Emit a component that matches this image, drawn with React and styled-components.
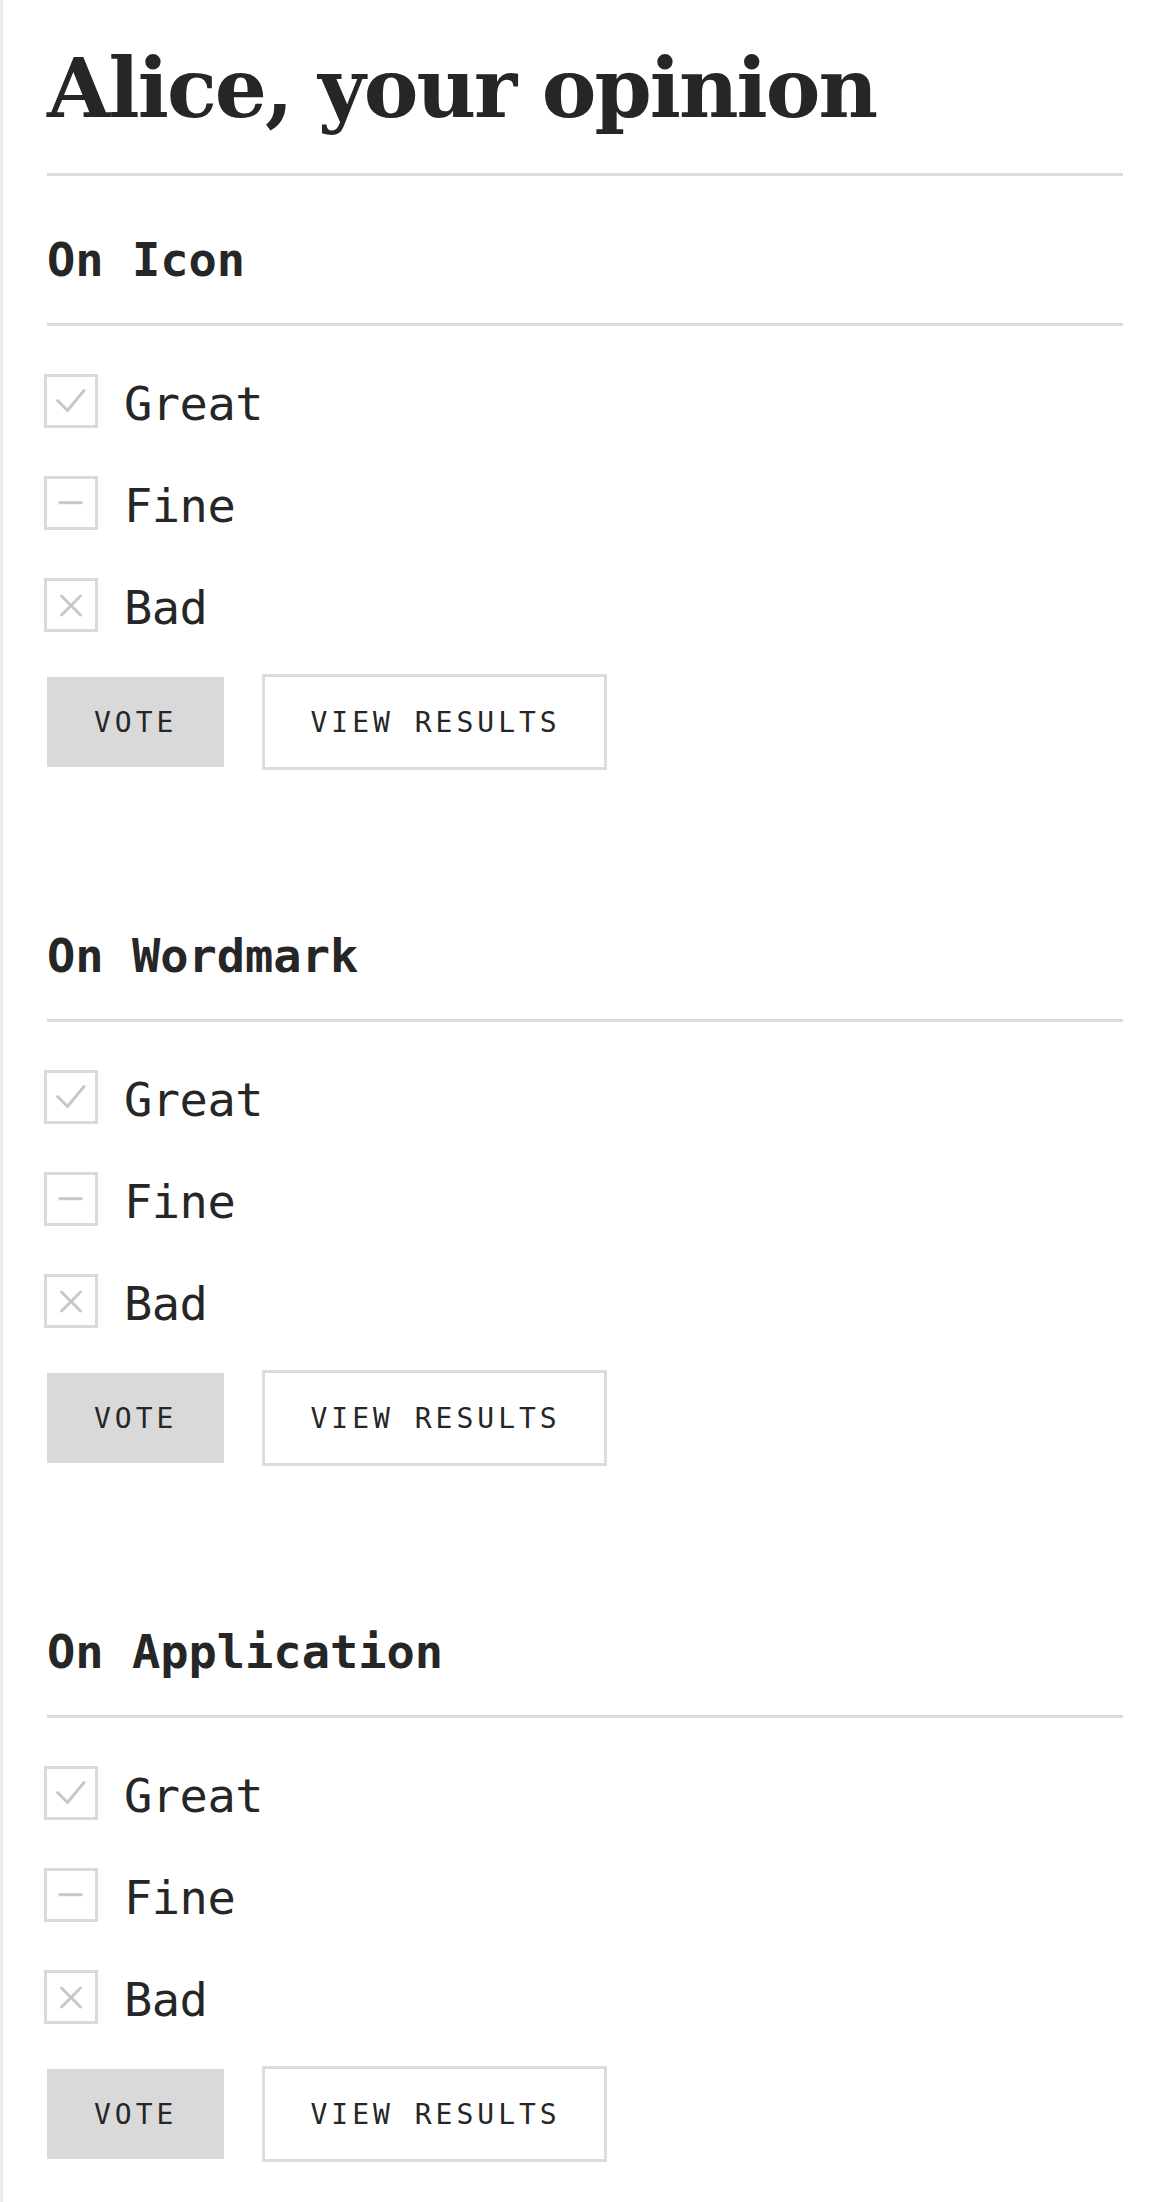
import React from "react"
import styled, { createGlobalStyle } from 'styled-components'

const GlobalStyle = createGlobalStyle`
  html, body {
    margin: 0;
    padding: 0;
    background: #ffffff;
  }
  * {
    box-sizing: border-box;
  }
`

const Page = styled.div`
  min-height: 2202px;
  border-left: 3px solid #ececec;
  padding: 38px 42px 40px 44px;
  color: #262626;
`

const Title = styled.h1`
  margin: 0;
  font-family: "DejaVu Serif", "Liberation Serif", serif;
  font-weight: 700;
  font-size: 82px;
  line-height: 100px;
  letter-spacing: -2px;
  padding-bottom: 35px;
  border-bottom: 3px solid #dcdcdc;
`

const Section = styled.section`
  margin-top: ${p => p.first ? '54px' : '156px'};
`

const SectionTitle = styled.h2`
  margin: 0;
  font-family: "DejaVu Sans Mono", monospace;
  font-weight: 700;
  font-size: 47px;
  line-height: 60px;
  padding-bottom: 33px;
  border-bottom: 3px solid #dcdcdc;
`

const Options = styled.ul`
  list-style: none;
  margin: 48px 0 0 0;
  padding: 0;
  display: flex;
  flex-direction: column;
  gap: 48px;
`

const Option = styled.li`
  display: flex;
  align-items: flex-start;
  height: 54px;
  gap: 26px;
  margin-left: -3px;
`

const Box = styled.span`
  flex: none;
  width: 54px;
  height: 54px;
  border: 3px solid #dadada;
  background: #fff;
  svg {
    display: block;
  }
`

const Label = styled.span`
  font-family: "DejaVu Sans Mono", monospace;
  font-size: 47px;
  line-height: 54px;
  padding-top: 3px;
  letter-spacing: -0.5px;
  color: #262626;
`

const Buttons = styled.div`
  display: flex;
  align-items: center;
  gap: 38px;
  margin-top: 42px;
`

const Button = styled.button`
  box-sizing: content-box;
  height: 90px;
  padding: ${p => p.outline ? '0 43px 0 45px' : '0 47px 0 47px'};
  margin: 0;
  font-family: "DejaVu Sans Mono", monospace;
  font-size: 28px;
  letter-spacing: 4px;
  text-transform: uppercase;
  color: #262626;
  cursor: pointer;
  background: ${p => p.outline ? '#ffffff' : '#d9d9d9'};
  border: ${p => p.outline ? '3px solid #dcdcdc' : 'none'};
`

const Mark = ({ kind }) => {
  const stroke = { stroke: '#c8c8c8', strokeWidth: 3, fill: 'none', strokeLinecap: 'round', strokeLinejoin: 'round' }
  // drawn in the 48px inner area of the box
  if (kind === 'great') {
    return (
      <svg width="48" height="48" viewBox="0 0 48 48">
        <polyline points="10.5,23.5 20.5,33.5 37,13.5" {...stroke} />
      </svg>
    )
  }
  if (kind === 'fine') {
    return (
      <svg width="48" height="48" viewBox="0 0 48 48">
        <line x1="11.5" y1="23.7" x2="35.5" y2="23.7" {...stroke} strokeLinecap="butt" />
      </svg>
    )
  }
  return (
    <svg width="48" height="48" viewBox="0 0 48 48">
      <line x1="14.5" y1="15" x2="33.5" y2="34" {...stroke} />
      <line x1="33.5" y1="15" x2="14.5" y2="34" {...stroke} />
    </svg>
  )
}

const options = [
  { kind: 'great', label: 'Great' },
  { kind: 'fine', label: 'Fine' },
  { kind: 'bad', label: 'Bad' },
]

const topics = ['On Icon', 'On Wordmark', 'On Application']

const Poll = ({ topic, first }) => (
  <Section first={first}>
    <SectionTitle>{topic}</SectionTitle>
    <Options>
      {options.map(o => (
        <Option key={o.kind}>
          <Box><Mark kind={o.kind} /></Box>
          <Label>{o.label}</Label>
        </Option>
      ))}
    </Options>
    <Buttons>
      <Button>Vote</Button>
      <Button outline>View results</Button>
    </Buttons>
  </Section>
)

const App = () => {
  return (
    <>
      <GlobalStyle />
      <Page>
        <Title>Alice, your opinion</Title>
        {topics.map((t, i) => (
          <Poll key={t} topic={t} first={i === 0} />
        ))}
      </Page>
    </>
  )
}

export default App
